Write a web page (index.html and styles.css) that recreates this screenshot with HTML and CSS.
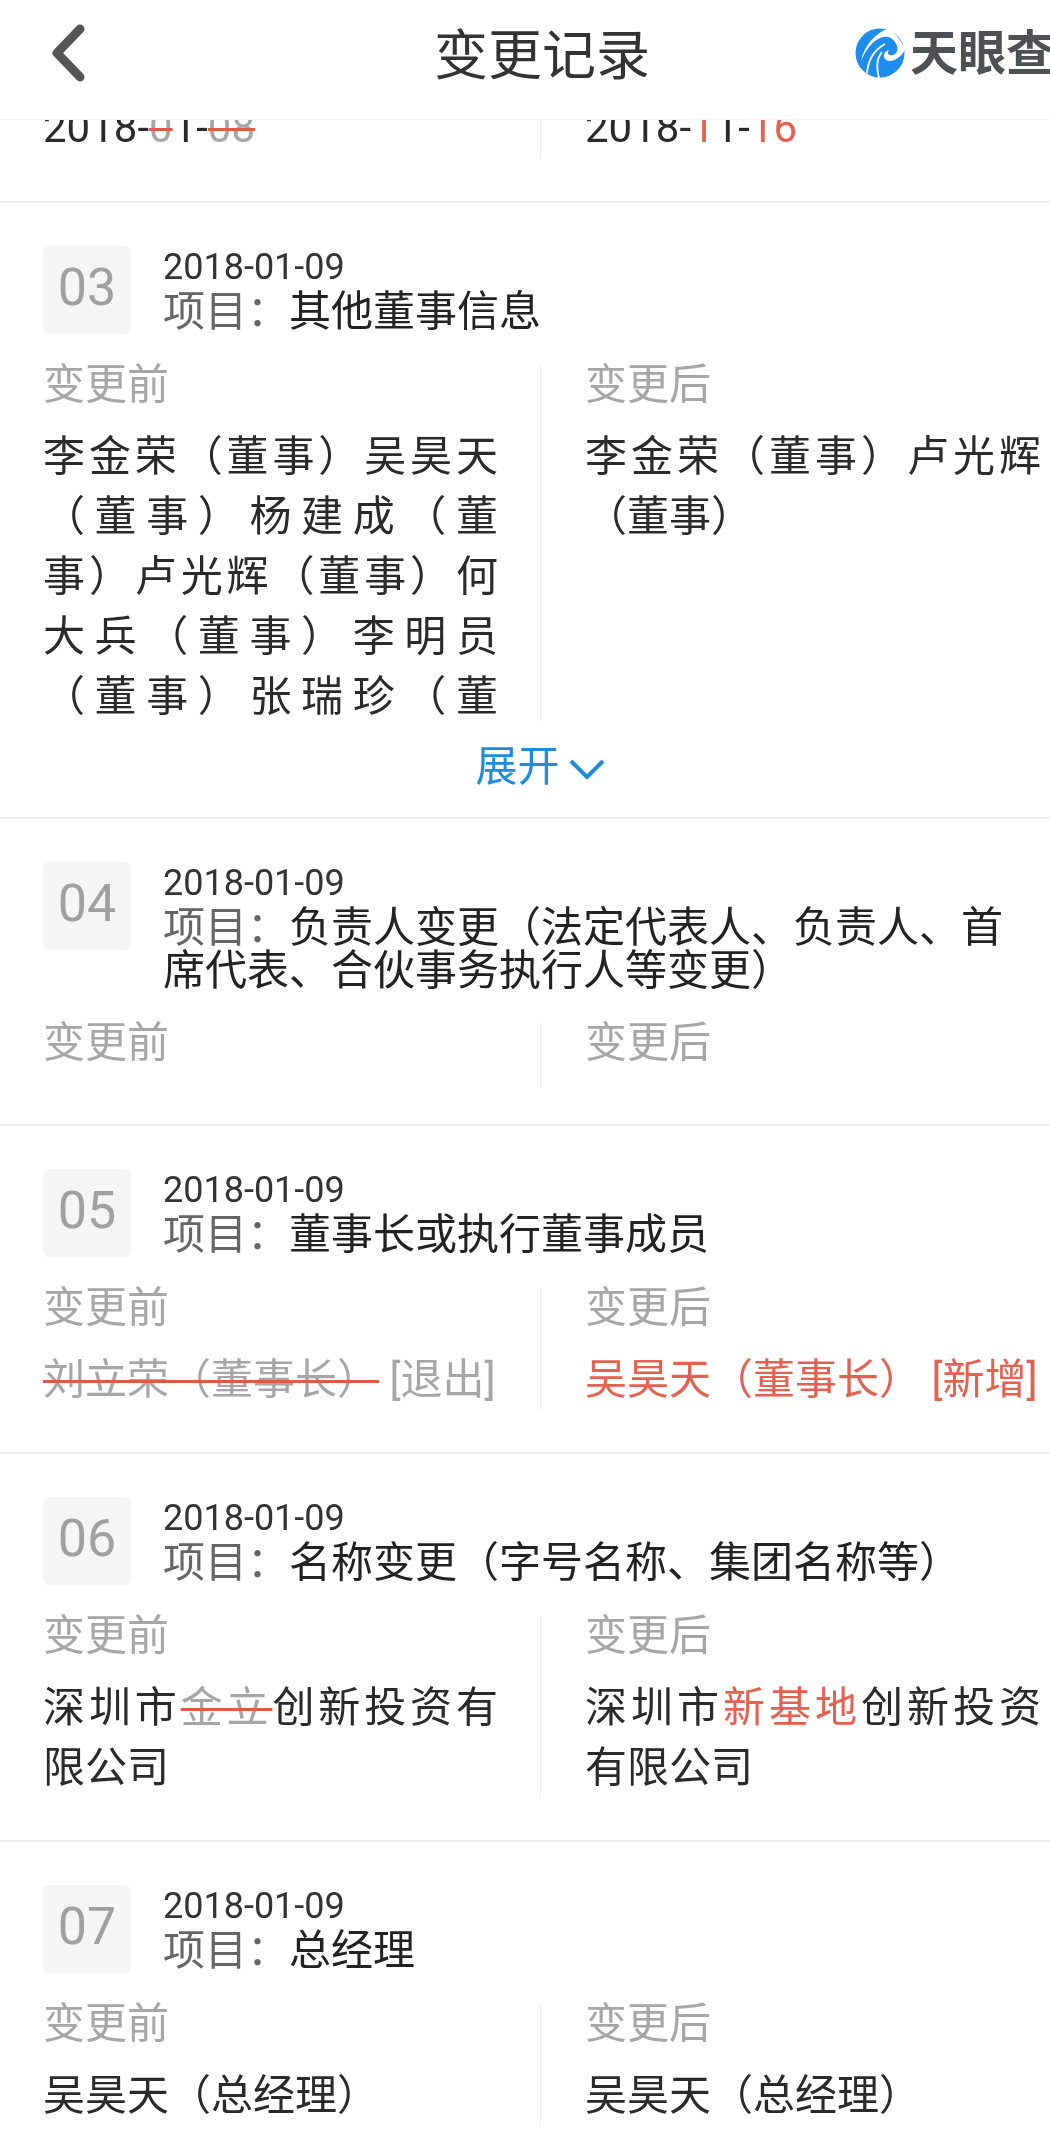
FILE: index.html
```html
<!DOCTYPE html>
<html lang="zh-CN">
<head>
<meta charset="utf-8">
<title>变更记录</title>
<link rel="stylesheet" href="styles.css">
</head>
<body>
<div class="page">
  <header class="nav">
    <svg class="nav-back" viewBox="0 0 42 66" aria-hidden="true"><path d="M32 9 L9 33 L32 57"/></svg>
    <h1 class="nav-title">变更记录</h1>
    <div class="brand">
      <svg class="brand-mark" viewBox="0 0 50 50" aria-hidden="true">
        <circle class="brand-disc" cx="25" cy="25" r="24.5"/>
        <path class="brand-cut" d="M34 0 C41 6 47 13 50 22 C45 31 36 35 31 32 C27 29 29 23 34 22 C31 26 35 29 40 26 C45 22 42 13 34 9 C25 7 14 14 6 33 C9 18 20 5 34 0 Z"/>
        <path class="brand-line" d="M12 45 C13 33 19 22 30 16"/>
        <path class="brand-line" d="M24 50 C21 39 22 30 27 24"/>
      </svg>
      <span class="brand-name">天眼查</span>
    </div>
  </header>

  <section class="entry entry--stub">
    <div class="changes">
      <div class="col"><p class="value">2018-<del>0</del>1-<del>08</del></p></div>
      <div class="col"><p class="value">2018-<ins>1</ins>1-<ins>16</ins></p></div>
    </div>
  </section>

  <section class="entry entry--expandable">
    <div class="head">
      <div class="num">03</div>
      <div class="meta">
        <div class="date">2018-01-09</div>
        <div class="topic"><span class="topic-key">项目：</span>其他董事信息</div>
      </div>
    </div>
    <div class="changes">
      <div class="col">
        <div class="label">变更前</div>
        <p class="value value--clamped">李金荣（董事）吴昊天（董事）杨建成（董事）卢光辉（董事）何大兵（董事）李明员（董事）张瑞珍（董事）</p>
      </div>
      <div class="col">
        <div class="label">变更后</div>
        <p class="value">李金荣（董事）卢光辉（董事）</p>
      </div>
    </div>
    <div class="expand">展开<svg class="expand-icon" viewBox="0 0 36 20" aria-hidden="true"><path d="M2 2 L18 18 L34 2"/></svg></div>
  </section>

  <section class="entry entry--empty">
    <div class="head">
      <div class="num">04</div>
      <div class="meta">
        <div class="date">2018-01-09</div>
        <div class="topic"><span class="topic-key">项目：</span>负责人变更（法定代表人、负责人、首席代表、合伙事务执行人等变更）</div>
      </div>
    </div>
    <div class="changes">
      <div class="col"><div class="label">变更前</div></div>
      <div class="col"><div class="label">变更后</div></div>
    </div>
  </section>

  <section class="entry">
    <div class="head">
      <div class="num">05</div>
      <div class="meta">
        <div class="date">2018-01-09</div>
        <div class="topic"><span class="topic-key">项目：</span>董事长或执行董事成员</div>
      </div>
    </div>
    <div class="changes">
      <div class="col">
        <div class="label">变更前</div>
        <p class="value value--nowrap"><del>刘立荣（董事长）</del> <span class="muted">[退出]</span></p>
      </div>
      <div class="col">
        <div class="label">变更后</div>
        <p class="value value--nowrap"><ins>吴昊天（董事长） [新增]</ins></p>
      </div>
    </div>
  </section>

  <section class="entry">
    <div class="head">
      <div class="num">06</div>
      <div class="meta">
        <div class="date">2018-01-09</div>
        <div class="topic"><span class="topic-key">项目：</span>名称变更（字号名称、集团名称等）</div>
      </div>
    </div>
    <div class="changes">
      <div class="col">
        <div class="label">变更前</div>
        <p class="value">深圳市<del>金立</del>创新投资有限公司</p>
      </div>
      <div class="col">
        <div class="label">变更后</div>
        <p class="value">深圳市<ins>新基地</ins>创新投资有限公司</p>
      </div>
    </div>
  </section>

  <section class="entry">
    <div class="head">
      <div class="num">07</div>
      <div class="meta">
        <div class="date">2018-01-09</div>
        <div class="topic"><span class="topic-key">项目：</span>总经理</div>
      </div>
    </div>
    <div class="changes">
      <div class="col">
        <div class="label">变更前</div>
        <p class="value">吴昊天（总经理）</p>
      </div>
      <div class="col">
        <div class="label">变更后</div>
        <p class="value">吴昊天（总经理）</p>
      </div>
    </div>
  </section>
</div>
</body>
</html>
```
FILE: styles.css
```css
* { box-sizing: border-box; }
html, body { margin: 0; padding: 0; background: #fff; }
body {
  font-family: Roboto, "Noto Sans CJK SC", sans-serif;
  color: #333;
  text-spacing-trim: space-all;
}
.page { width: 1050px; height: 2142px; overflow: hidden; filter: blur(0.5px); }

.nav {
  position: relative;
  z-index: 1;
  display: flex;
  align-items: center;
  height: 120px;
  padding-left: 48px;
  background: #fff;
  border-bottom: 1px solid #f3f3f3;
  overflow: hidden;
}
.nav-back { width: 42px; height: 66px; margin-right: 344px; margin-top: -13px; flex: none; }
.nav-back path { fill: none; stroke: #555; stroke-width: 9; stroke-linecap: round; stroke-linejoin: round; }
.nav-title { margin: -6px 0 0; font-size: 54px; line-height: 60px; font-weight: 400; color: #333; flex: none; }
.brand { display: flex; align-items: center; gap: 5px; margin-left: 205px; flex: none; margin-top: -14px; }
.brand-mark { width: 50px; height: 50px; flex: none; }
.brand-disc { fill: #1e8cec; }
.brand-cut { fill: #fff; }
.brand-line { fill: none; stroke: #fff; stroke-width: 1.8; }
.brand-name { font-size: 48px; line-height: 50px; font-weight: 700; color: #4e5056; white-space: nowrap; margin-top: 3px; }

.entry { padding: 43px 0 42px 43px; border-bottom: 2px solid #eee; }
.entry--stub {
  height: 83px;
  padding-top: 0;
  padding-bottom: 0;
  overflow: hidden;
}
.entry--stub .changes { margin-top: 0; height: 39px; }
.entry--stub .value { margin: -22px 0 0; text-align: left; white-space: nowrap; }
.entry--expandable { padding-bottom: 22px; }
.entry--empty { padding-bottom: 36px; }
.entry--empty .col { min-height: 65px; }

.head { display: flex; gap: 32px; padding-right: 40px; }
.num {
  flex: none;
  width: 88px;
  height: 88px;
  padding-bottom: 6px;
  display: flex;
  align-items: center;
  justify-content: center;
  background: #f5f5f5;
  border-radius: 6px;
  font-size: 52px;
  color: #a0a0a0;
}
.meta { margin-top: -1px; min-width: 0; }
.date { font-size: 36px; line-height: 44px; color: #333; }
.topic { font-size: 42px; line-height: 43px; color: #222; margin-top: 1px; }
.topic-key { color: #666; }

.changes { display: grid; grid-template-columns: 497px 510px; margin-top: 31px; }
.col { min-width: 0; padding-right: 42px; }
.col + .col { border-left: 1px solid #eee; padding-left: 44px; padding-right: 9px; }
.label { font-size: 42px; line-height: 40px; color: #a6a6a6; }
.value { margin: 22px 0 0; font-size: 42px; line-height: 60px; color: #2a2a2a; text-align: justify; }
.value--clamped { height: 294px; overflow: hidden; }
.value--nowrap { white-space: nowrap; text-align: left; }
.muted { color: #a6a6a6; }

del { color: #a6a6a6; text-decoration: line-through #e0584a 3px; }
ins { color: #e4604f; text-decoration: none; }

.expand {
  display: flex;
  align-items: center;
  justify-content: center;
  gap: 9px;
  margin: 18px 0 0 -13px;
  font-size: 42px;
  line-height: 56px;
  color: #1e8cdc;
}
.expand-icon { width: 36px; height: 20px; flex: none; margin-top: 4px; }
.expand-icon path { fill: none; stroke: #1e8cdc; stroke-width: 4; }
```
